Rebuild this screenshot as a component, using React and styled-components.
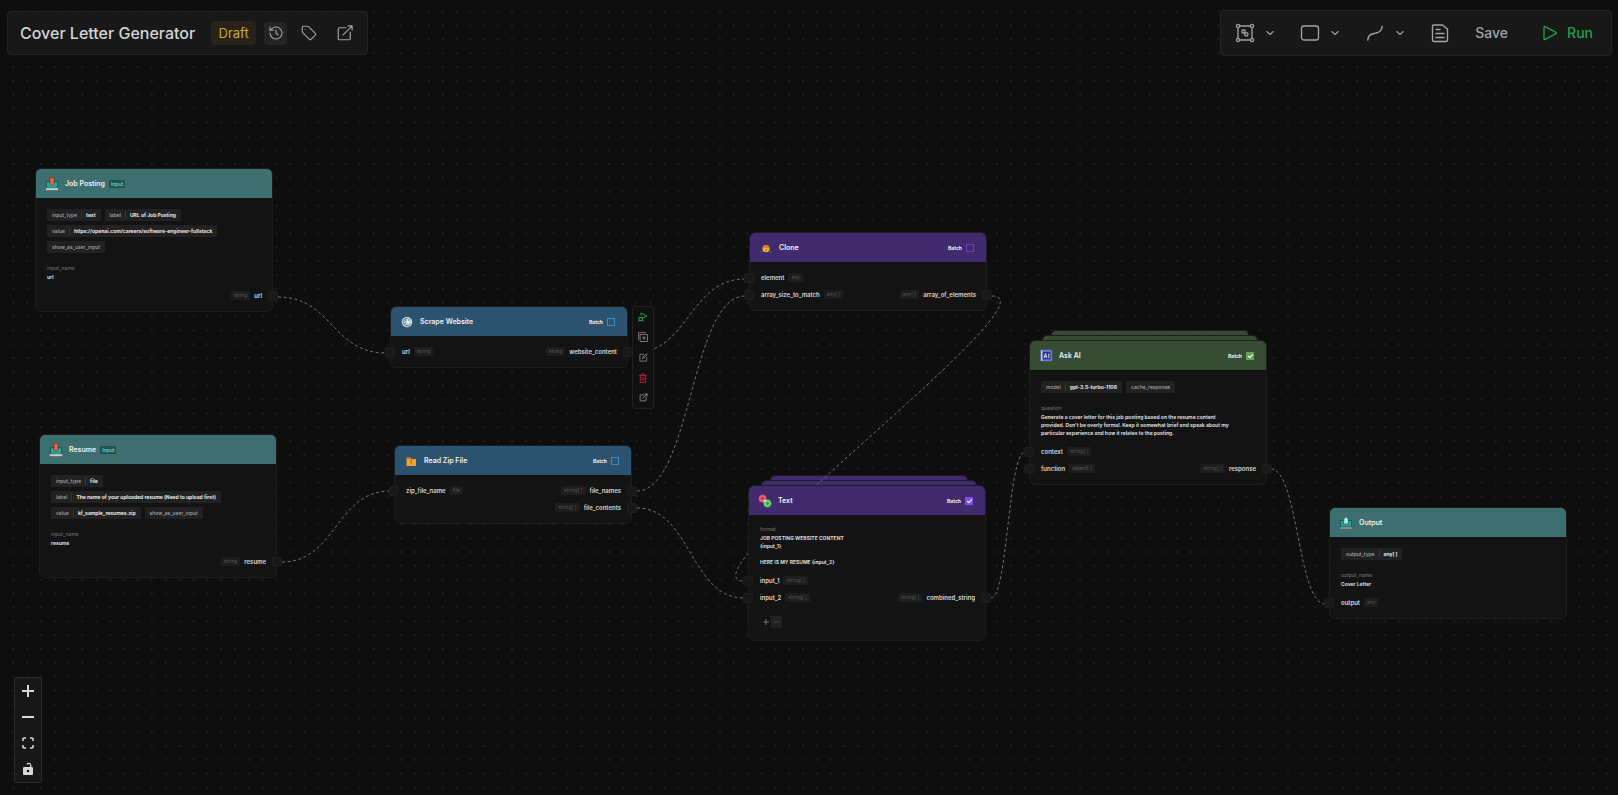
import React from "react";
import styled, { createGlobalStyle, css } from "styled-components";

const GlobalStyle = createGlobalStyle`
  *, *::before, *::after { box-sizing: border-box; }
  body {
    margin: 0;
    background: #0e0e0e;
    color: #e4e4e4;
    font-family: Inter, "Liberation Sans", sans-serif;
  }
  button { font-family: inherit; }
  svg { display: block; }
`;

const THEMES = {
  teal: { header: "#3d6e70", accent: "#2dd4bf" },
  blue: { header: "#2b5370", accent: "#3f8cc4" },
  purple: { header: "#412a6d", accent: "#6a3fc4", checked: "#7c4ff0" },
  green: { header: "#364d33", accent: "#5a9a56", checked: "#5fa35a" },
};

/* ---------- page shell ---------- */

const Canvas = styled.main`
  position: relative;
  display: flex;
  flex-direction: column;
  justify-content: space-between;
  height: 100vh;
  overflow: hidden;
  background: #0e0e0e;
`;

const GridLayer = styled.svg`
  position: absolute;
  inset: 0;
  width: 100%;
  height: 100%;
`;

const EdgeLayer = styled.svg`
  position: absolute;
  inset: 0;
  width: 100%;
  height: 100%;
  z-index: 2;
  pointer-events: none;
`;

const TopBar = styled.header`
  position: relative;
  z-index: 5;
  display: flex;
  justify-content: space-between;
  align-items: center;
  padding: 10px 6px 0 7px;
`;

const Panel = styled.div`
  display: flex;
  align-items: center;
  background: #181818;
  border: 1px solid #242424;
  border-radius: 4px;
`;

const TitlePanel = styled(Panel)`
  height: 44px;
  padding: 0 11px 0 12px;
`;

const ActionPanel = styled(Panel)`
  height: 46px;
  padding: 0 10px 0 12px;
`;

const FlowTitle = styled.h1`
  margin: 0 16px 0 0;
  font-size: 16px;
  line-height: 24px;
  font-weight: 500;
  color: #d4d4d4;
  white-space: nowrap;
`;

const DraftBadge = styled.span`
  width: 45px;
  margin-right: 8px;
  border-radius: 4px;
  background: #27231a;
  color: #c9ab27;
  font-size: 13px;
  line-height: 24px;
  font-weight: 400;
  text-align: center;
`;

const IconButton = styled.button`
  display: flex;
  align-items: center;
  justify-content: center;
  width: 23px;
  height: 23px;
  margin-right: ${(p) => p.$gap || 0}px;
  padding: 0;
  border: 0;
  border-radius: 4px;
  background: ${(p) => (p.$filled ? "#242424" : "transparent")};
  color: #a3a3a3;
`;

const ToolGroup = styled.div`
  display: flex;
  align-items: center;
  gap: 5px;
  margin-right: 20px;
`;

const ToolButton = styled(IconButton)`
  width: 24px;
  height: 24px;
`;

const ChevronButton = styled(IconButton)`
  width: 16px;
  height: 24px;
`;

const TextButton = styled.button`
  display: flex;
  align-items: center;
  gap: 9px;
  margin-left: ${(p) => p.$before}px;
  padding: 0 8px;
  border: 0;
  background: transparent;
  color: ${(p) => (p.$primary ? "#22a04a" : "#a3a3a3")};
  font-size: 14px;
  line-height: 24px;
  font-weight: 500;
`;

const ZoomPanel = styled.div`
  position: relative;
  z-index: 5;
  align-self: flex-start;
  display: flex;
  flex-direction: column;
  margin: 0 0 12px 14px;
  width: 28px;
  background: #171717;
  border: 1px solid #2a2a2a;
  border-radius: 2px;
`;

const ZoomButton = styled.button`
  display: flex;
  align-items: center;
  justify-content: center;
  height: 26px;
  padding: 0;
  border: 0;
  background: transparent;
  color: #d8d8d8;
`;

/* ---------- nodes ---------- */

const NodeAnchor = styled.article`
  position: absolute;
  left: ${(p) => p.$x}px;
  top: ${(p) => p.$y}px;
  width: 238px;
`;

const StackSheet = styled.div`
  position: absolute;
  z-index: 1;
  top: ${(p) => p.$depth * -5}px;
  left: ${(p) => p.$depth * 9 + 4}px;
  right: ${(p) => p.$depth * 9}px;
  height: 12px;
  border: 1px solid #1e1e1e;
  border-radius: 5px 5px 0 0;
  background: ${(p) => THEMES[p.$theme].header};
`;

const Card = styled.div`
  position: relative;
  z-index: 3;
  border: 1px solid #1d1d1d;
  border-radius: 6px;
  background: #131313;
`;

const CardHeader = styled.header`
  display: flex;
  align-items: center;
  height: 29px;
  padding: 0 12px 0 9px;
  border-radius: 5px 5px 0 0;
  background: ${(p) => THEMES[p.$theme].header};
`;

const IconSlot = styled.span`
  display: flex;
  align-items: center;
  justify-content: center;
  width: 14px;
  margin-right: 6px;
`;

const NodeTitle = styled.h2`
  margin: 0;
  font-size: 7px;
  line-height: 12px;
  font-weight: 600;
  color: #f2f2f2;
  white-space: nowrap;
`;

const InputBadge = styled.span`
  margin-left: 4px;
  padding: 0 2px;
  border-radius: 1px;
  background: #24504f;
  color: #6fe3d8;
  font-size: 5px;
  line-height: 8px;
  font-weight: 500;
`;

const BatchLabel = styled.label`
  display: flex;
  align-items: center;
  gap: 4px;
  margin-left: auto;
  font-size: 5px;
  line-height: 8px;
  font-weight: 700;
  color: #f2f2f2;
`;

const BatchBox = styled.input`
  appearance: none;
  display: grid;
  place-items: center;
  width: 8px;
  height: 8px;
  margin: 0;
  border: 1px solid ${(p) => THEMES[p.$theme].accent};
  ${(p) =>
    p.checked &&
    css`
      border-color: ${THEMES[p.$theme].checked};
      background: ${THEMES[p.$theme].checked};
    `}
  &:checked::before {
    content: "";
    width: 3px;
    height: 5px;
    border: solid #fff;
    border-width: 0 1px 1px 0;
    transform: rotate(45deg);
  }
`;

const CardBody = styled.div`
  padding: 7px 10px 7px 11px;
`;

const Chips = styled.div`
  display: flex;
  flex-wrap: wrap;
  gap: 4px;
  margin: 4px 0 11px;
`;

const Chip = styled.span`
  display: flex;
  align-items: center;
  height: 12px;
  padding: 0 5px;
  border-radius: 1px;
  background: #212121;
  color: #a8a8a8;
  font-size: 5px;
  line-height: 8px;
  font-weight: 500;
  white-space: nowrap;
`;

const ChipValue = styled.strong`
  margin-left: 4px;
  padding-left: 4px;
  border-left: 1px solid #343434;
  color: #e8e8e8;
  font-weight: 700;
`;

const Field = styled.div`
  margin: 3px 0 6px;
  font-size: 5px;
`;

const FieldName = styled.div`
  line-height: 9px;
  font-weight: 500;
  color: #6c6c6c;
`;

const FieldText = styled.p`
  max-width: 192px;
  margin: 0;
  line-height: 8px;
  font-weight: 700;
  color: #dcdcdc;
  white-space: pre-line;
`;

const PortRow = styled.div`
  display: flex;
  justify-content: space-between;
  align-items: center;
  height: 17px;
`;

const Port = styled.div`
  position: relative;
  display: flex;
  flex-direction: ${(p) => (p.$side === "out" ? "row-reverse" : "row")};
  align-items: center;
  gap: 4px;
  height: 17px;
  margin-left: ${(p) => (p.$side === "out" ? "auto" : "0")};
  font-size: 6px;
  line-height: 9px;
  font-weight: 600;
  color: #d8d8d8;
`;

const TypeTag = styled.span`
  padding: 0 3px;
  border-radius: 1px;
  background: #1d1d1d;
  color: #585858;
  font-size: 5px;
  line-height: 9px;
  font-weight: 400;
`;

const Handle = styled.i`
  position: absolute;
  top: 4px;
  ${(p) => (p.$side === "out" ? "right: -16px;" : "left: -17px;")}
  width: 10px;
  height: 10px;
  border: 1px solid #1e1e1e;
  border-radius: 2px;
  background: #191919;
`;

const Counter = styled.div`
  display: flex;
  margin: 10px 0 5px;
`;

const CounterButton = styled.button`
  display: flex;
  align-items: center;
  justify-content: center;
  width: 11px;
  height: 12px;
  padding: 0;
  border: 1px solid ${(p) => (p.$muted ? "#222" : "#181818")};
  background: ${(p) => (p.$muted ? "#222" : "#111")};
  color: ${(p) => (p.$muted ? "#4a4a4a" : "#8a8a8a")};
`;

const NodeTools = styled.div`
  position: absolute;
  z-index: 4;
  top: 0;
  left: 242px;
  display: flex;
  flex-direction: column;
  justify-content: space-around;
  align-items: center;
  width: 22px;
  height: 103px;
  border: 1px solid #202020;
  border-radius: 3px;
  background: #101010;
`;

const NodeToolButton = styled.button`
  display: flex;
  align-items: center;
  justify-content: center;
  width: 20px;
  height: 20px;
  padding: 0;
  border: 0;
  background: transparent;
  color: ${(p) => p.$tone || "#8c8c8c"};
`;

/* ---------- icons ---------- */

const Line = ({ size = 18, box = 24, width = 1.5, children }) => (
  <svg width={size} height={size} viewBox={`0 0 ${box} ${box}`} fill="none" stroke="currentColor" strokeWidth={width} strokeLinecap="round" strokeLinejoin="round" aria-hidden="true">
    {children}
  </svg>
);

const HistoryIcon = () => (
  <Line size={16} width={1.6}>
    <path d="M3 12a9 9 0 1 0 3-6.7L3 8" />
    <path d="M3 3v5h5M12 7v5l3 3" />
  </Line>
);
const TagIcon = () => (
  <Line size={18} width={1.5}>
    <path d="M3 4.500A1.500 1.500 0 0 1 4.500 3H10a2 2 0 0 1 1.400.6l9 9a1.500 1.500 0 0 1 0 2.100l-5.700 5.700a1.500 1.500 0 0 1-2.100 0l-9-9A2 2 0 0 1 3 10z" />
    <path d="M7 7h.01" />
  </Line>
);
const OpenIcon = ({ size = 18, width = 1.6 }) => (
  <Line size={size} width={width}>
    <path d="M13 5H4.500A1.500 1.500 0 0 0 3 6.500v13A1.500 1.500 0 0 0 4.500 21h13a1.500 1.500 0 0 0 1.500-1.500V11" />
    <path d="M9.500 14.500 21.500 2.500M16 2.500h5.500V8" />
  </Line>
);
const GroupIcon = () => (
  <Line size={20} box={20} width={1.3}>
    <path d="M5 3h10M5 17h10M3 5v10M17 5v10" />
    <circle cx="3" cy="3" r="1.600" /><circle cx="17" cy="3" r="1.600" />
    <circle cx="3" cy="17" r="1.600" /><circle cx="17" cy="17" r="1.600" />
    <rect x="7" y="7" width="3" height="3" rx=".8" />
    <rect x="9.800" y="9.800" width="3" height="3" rx=".8" />
  </Line>
);
const ChevronIcon = () => (
  <Line size={8} box={8} width={1.1}><path d="M.8 2.500 4 5.500 7.200 2.500" /></Line>
);
const RectIcon = () => (
  <Line size={20} box={20} width={1.3}><rect x="1.500" y="3" width="17" height="14" rx="2.500" /></Line>
);
const CurveIcon = () => (
  <Line size={18} box={18} width={1.5}><path d="M1.800 16c.3-4 2-5.600 5.300-6.300l3-.6c3.500-.8 5.500-2.500 6-6.600" /></Line>
);
const DocIcon = () => (
  <Line size={20} box={20} width={1.4}>
    <path d="M3.500 2h9L17.500 6v10.500a2 2 0 0 1-2 2h-11a2 2 0 0 1-2-2V3a1 1 0 0 1 1-1z" />
    <path d="M6 6.500h4M6 10.500h8M6 14.500h8" />
  </Line>
);
const PlayIcon = () => (
  <Line size={16} box={16} width={1.3}><path d="M2 2.300v11.400c0 .7.6 1 1.200.7L14 8.600c.6-.3.6-.9 0-1.200L3.200 1.600C2.600 1.300 2 1.600 2 2.300z" /></Line>
);
const PlusIcon = ({ size = 12, width = 2 }) => (
  <Line size={size} box={12} width={width}><path d="M6 0v12M0 6h12" strokeLinecap="butt" /></Line>
);
const MinusIcon = ({ size = 12, width = 2 }) => (
  <Line size={size} box={12} width={width}><path d="M0 6h12" strokeLinecap="butt" /></Line>
);
const FitIcon = () => (
  <Line size={12} box={12} width={1.6}><path d="M1 4V2a1 1 0 0 1 1-1h2M8 1h2a1 1 0 0 1 1 1v2M11 8v2a1 1 0 0 1-1 1H8M4 11H2a1 1 0 0 1-1-1V8" strokeLinecap="butt" /></Line>
);
const UnlockIcon = () => (
  <svg width="12" height="14" viewBox="0 0 12 14" aria-hidden="true">
    <path fill="currentColor" fillRule="evenodd" d="M2 5h8a1 1 0 0 1 1 1v6a1 1 0 0 1-1 1H2a1 1 0 0 1-1-1V6a1 1 0 0 1 1-1zm4 2.700a1.300 1.300 0 1 0 0 2.600 1.300 1.300 0 0 0 0-2.600z" />
    <path d="M5 2.500C5.300 1 8.500.6 8.700 3.200V5" fill="none" stroke="currentColor" strokeWidth="1.300" />
  </svg>
);
const RunNodeIcon = () => (
  <Line size={10} box={10} width={1}>
    <path d="M3 3V1l6 3-3 2M1.500 5.500h3v3h-3zM.5 5 1.500 6M5.500 5l-1 1M.5 9l1-.7M5.500 9l-1-.7" />
  </Line>
);
const CopyIcon = () => (
  <Line size={10} box={10} width={0.8}><path d="M2.500 2.500h7v7h-7zM.6 7.500V.6h7M6 4.500v3M4.500 6h3" /></Line>
);
const EditIcon = () => (
  <Line size={9} box={10} width={0.9}><path d="M5 1.500H1v7.500h7.500V5M4 6l.4-1.500L8.200.8l1 1L5.500 5.600 4 6" /></Line>
);
const TrashIcon = () => (
  <Line size={10} box={10} width={1}><path d="M1.500 2.500h7M3.500 2.300V1h3v1.300M2.300 2.500v7h5.400v-7M4.200 4.300v3.200M5.800 4.300v3.200" /></Line>
);

const TrayIcon = ({ up }) => (
  <svg width="14" height="14" viewBox="0 0 14 14" aria-hidden="true">
    <path d="M1.500 4.500h11V11h-11z" fill="#1fa79b" stroke="#123c40" strokeWidth=".6" />
    <path d="M.6 10.800h12.800v2.600H.6z" fill={up ? "#8b9496" : "#c8cfd0"} stroke="#3a4648" strokeWidth=".4" />
    {up ? (
      <path d="M7 .6 9.300 3V8H4.700V3z" fill="#a4f2e4" stroke="#16494b" strokeWidth=".7" />
    ) : (
      <path d="M5 .5h4v4.800h1L7 8.500 4 5.300h1z" fill="#f2603f" stroke="#6d2a25" strokeWidth=".6" />
    )}
  </svg>
);
const GlobeIcon = () => (
  <svg width="12" height="12" viewBox="0 0 12 12" aria-hidden="true">
    <circle cx="6" cy="6" r="5.300" fill="#c5d5df" />
    <path d="M6.500 2.200A3.800 3.800 0 1 0 9.500 8M4 3.500l2 2.500-2.500 2M6 6l3-3.500" fill="none" stroke="#4a7898" strokeWidth="1" />
    <circle cx="6.500" cy="5.700" r="1.300" fill="#fff" />
  </svg>
);
const ZipIcon = () => (
  <svg width="12" height="12" viewBox="0 0 12 12" aria-hidden="true">
    <path d="M1.500 2.500h4l1 1.500h4.500v7H1.500z" fill="#f0a22c" />
    <path d="M1.500 2.500h4l1 1.500H1.500z" fill="#c86f1c" />
    <path d="M6.300 4.500V9" stroke="#8c5a1b" strokeWidth="1.200" strokeDasharray="1 .6" />
  </svg>
);
const CloneIcon = () => (
  <svg width="12" height="12" viewBox="0 0 12 12" aria-hidden="true">
    <path d="M.8 10.500 2 8.800M11.200 10.500 10 8.800" stroke="#2c8f7a" strokeWidth=".9" />
    <circle cx="6" cy="6.700" r="3.600" fill="#f3b134" />
    <path d="M2.800 5.500a3.300 3.300 0 0 1 6.400 0L8 6.300 6 5.200 4 6.300z" fill="#e2702d" />
    <path d="M4.800 8.200h2.400" stroke="#9a5414" strokeWidth=".8" />
  </svg>
);
const TextIcon = () => (
  <svg width="14" height="14" viewBox="0 0 14 14" aria-hidden="true">
    <circle cx="4.600" cy="4.600" r="4.200" fill="#f0577d" stroke="#3a1c48" strokeWidth=".4" />
    <circle cx="9.400" cy="9.400" r="4.200" fill="#6fca7c" stroke="#1d3c2c" strokeWidth=".4" />
    <circle cx="4.500" cy="4.300" r="1.200" fill="#9e2f55" />
    <circle cx="9.600" cy="9.500" r="1.200" fill="#2f7c46" />
    <path d="m5.500 7.300 2.300-.9" stroke="#fff" strokeWidth="1.200" />
  </svg>
);
const AiIcon = () => (
  <svg width="13" height="13" viewBox="0 0 13 13" aria-hidden="true">
    <rect x=".8" y=".8" width="11.400" height="11.400" rx="1.500" fill="#6a78d8" />
    <path d="M1.500 1v11" stroke="#a9c8ff" strokeWidth="1.400" />
    <rect x="3" y="2.800" width="7.500" height="7.500" fill="#33307d" />
    <path d="m4 9 1.500-4.500L7 9M4.600 7.600h1.900M8.800 4.500V9" fill="none" stroke="#e8ecff" strokeWidth=".9" />
  </svg>
);

/* ---------- data ---------- */

const NODES = [
  {
    id: "job", title: "Job Posting", theme: "teal", x: 35, y: 168, icon: <TrayIcon />, badge: "Input",
    chips: [["input_type", "text"], ["label", "URL of Job Posting"], ["value", "https://openai.com/careers/software-engineer-fullstack"], ["show_as_user_input"]],
    field: ["input_name", "url"],
    ports: [{ out: ["url", "string"] }],
  },
  {
    id: "resume", title: "Resume", theme: "teal", x: 39, y: 434, icon: <TrayIcon />, badge: "Input",
    chips: [["input_type", "file"], ["label", "The name of your uploaded resume (Need to upload first)"], ["value", "kf_sample_resumes.zip"], ["show_as_user_input"]],
    field: ["input_name", "resume"],
    ports: [{ out: ["resume", "string"] }],
  },
  {
    id: "scrape", title: "Scrape Website", theme: "blue", x: 390, y: 306, icon: <GlobeIcon />, batch: false, tools: true,
    ports: [{ in: ["url", "string"], out: ["website_content", "string"] }],
  },
  {
    id: "zip", title: "Read Zip File", theme: "blue", x: 394, y: 445, icon: <ZipIcon />, batch: false,
    ports: [{ in: ["zip_file_name", "file"], out: ["file_names", "string[ ]"] }, { out: ["file_contents", "string[ ]"] }],
  },
  {
    id: "clone", title: "Clone", theme: "purple", x: 749, y: 232, icon: <CloneIcon />, batch: false,
    ports: [{ in: ["element", "any"] }, { in: ["array_size_to_match", "any[ ]"], out: ["array_of_elements", "any[ ]"] }],
  },
  {
    id: "text", title: "Text", theme: "purple", x: 748, y: 485, icon: <TextIcon />, batch: true, counter: true,
    field: ["format", "JOB POSTING WEBSITE CONTENT\n{input_1}\n\nHERE IS MY RESUME {input_2}"],
    ports: [{ in: ["input_1", "string[ ]"] }, { in: ["input_2", "string[ ]"], out: ["combined_string", "string[ ]"] }],
  },
  {
    id: "ai", title: "Ask AI", theme: "green", x: 1029, y: 340, icon: <AiIcon />, batch: true,
    chips: [["model", "gpt-3.5-turbo-1106"], ["cache_response"]],
    field: ["question", "Generate a cover letter for this job posting based on the resume content provided. Don't be overly formal. Keep it somewhat brief and speak about my particular experience and how it relates to the posting."],
    ports: [{ in: ["context", "string[ ]"] }, { in: ["function", "object[ ]"], out: ["response", "string[ ]"] }],
  },
  {
    id: "output", title: "Output", theme: "teal", x: 1329, y: 507, icon: <TrayIcon up />,
    chips: [["output_type", "any[ ]"]],
    field: ["output_name", "Cover Letter"],
    ports: [{ in: ["output", "any"] }],
  },
];

const EDGES = [
  [278, 297, 386, 353],
  [282, 562, 390, 491],
  [633, 353, 745, 279],
  [637, 491, 745, 296],
  [637, 508, 744, 598],
  [992, 296, 744, 581],
  [991, 598, 1025, 452],
  [1271, 469, 1325, 604],
];

const edgePath = ([x1, y1, x2, y2]) => {
  const reach = x2 >= x1 ? (x2 - x1) / 2 : 4.4 * Math.sqrt(x1 - x2);
  return `M${x1} ${y1}C${x1 + reach} ${y1} ${x2 - reach} ${y2} ${x2} ${y2}`;
};

/* ---------- components ---------- */

function PortItem({ side, port }) {
  return (
    <Port $side={side}>
      <span>{port[0]}</span>
      <TypeTag>{port[1]}</TypeTag>
      <Handle $side={side} />
    </Port>
  );
}

function FlowNode({ node }) {
  const hasBatch = node.batch !== undefined;
  return (
    <NodeAnchor $x={node.x} $y={node.y}>
      {node.batch && (
        <>
          <StackSheet $theme={node.theme} $depth={2} />
          <StackSheet $theme={node.theme} $depth={1} />
        </>
      )}
      <Card>
        <CardHeader $theme={node.theme}>
          <IconSlot>{node.icon}</IconSlot>
          <NodeTitle>{node.title}</NodeTitle>
          {node.badge && <InputBadge>{node.badge}</InputBadge>}
          {hasBatch && (
            <BatchLabel>
              Batch
              <BatchBox type="checkbox" checked={node.batch} readOnly $theme={node.theme} />
            </BatchLabel>
          )}
        </CardHeader>
        <CardBody>
          {node.chips && (
            <Chips>
              {node.chips.map(([name, value]) => (
                <Chip key={name}>
                  {name}
                  {value && <ChipValue>{value}</ChipValue>}
                </Chip>
              ))}
            </Chips>
          )}
          {node.field && (
            <Field>
              <FieldName>{node.field[0]}</FieldName>
              <FieldText>{node.field[1]}</FieldText>
            </Field>
          )}
          {node.ports.map((row, i) => (
            <PortRow key={i}>
              {row.in && <PortItem side="in" port={row.in} />}
              {row.out && <PortItem side="out" port={row.out} />}
            </PortRow>
          ))}
          {node.counter && (
            <Counter>
              <CounterButton type="button" aria-label="Add input"><PlusIcon size={6} width={1.6} /></CounterButton>
              <CounterButton type="button" aria-label="Remove input" $muted><MinusIcon size={6} width={1.6} /></CounterButton>
            </Counter>
          )}
        </CardBody>
      </Card>
      {node.tools && (
        <NodeTools>
          <NodeToolButton type="button" aria-label="Run node" $tone="#22a04a"><RunNodeIcon /></NodeToolButton>
          <NodeToolButton type="button" aria-label="Duplicate"><CopyIcon /></NodeToolButton>
          <NodeToolButton type="button" aria-label="Edit"><EditIcon /></NodeToolButton>
          <NodeToolButton type="button" aria-label="Delete" $tone="#a81f3a"><TrashIcon /></NodeToolButton>
          <NodeToolButton type="button" aria-label="Open"><OpenIcon size={9} width={2.4} /></NodeToolButton>
        </NodeTools>
      )}
    </NodeAnchor>
  );
}

export default function App() {
  return (
    <>
      <GlobalStyle />
      <Canvas>
        <GridLayer aria-hidden="true">
          <defs>
            <pattern id="dots" x="6.400" y="4.700" width="13.855" height="13.855" patternUnits="userSpaceOnUse">
              <circle cx="6.900" cy="6.900" r="0.700" fill="#363636" />
            </pattern>
          </defs>
          <rect width="100%" height="100%" fill="url(#dots)" />
        </GridLayer>
        <EdgeLayer aria-hidden="true">
          {EDGES.map((edge) => (
            <path key={edge.join()} d={edgePath(edge)} fill="none" stroke="#727272" strokeWidth="1" strokeDasharray="3 2.500" />
          ))}
        </EdgeLayer>
        {NODES.map((node) => <FlowNode key={node.id} node={node} />)}

        <TopBar>
          <TitlePanel>
            <FlowTitle>Cover Letter Generator</FlowTitle>
            <DraftBadge>Draft</DraftBadge>
            <IconButton type="button" aria-label="History" $filled $gap={10}><HistoryIcon /></IconButton>
            <IconButton type="button" aria-label="Tags" $gap={13}><TagIcon /></IconButton>
            <IconButton type="button" aria-label="Share"><OpenIcon /></IconButton>
          </TitlePanel>
          <ActionPanel>
            <ToolGroup>
              <ToolButton type="button" aria-label="Group"><GroupIcon /></ToolButton>
              <ChevronButton type="button" aria-label="Group options"><ChevronIcon /></ChevronButton>
            </ToolGroup>
            <ToolGroup>
              <ToolButton type="button" aria-label="Shape"><RectIcon /></ToolButton>
              <ChevronButton type="button" aria-label="Shape options"><ChevronIcon /></ChevronButton>
            </ToolGroup>
            <ToolGroup>
              <ToolButton type="button" aria-label="Edge style"><CurveIcon /></ToolButton>
              <ChevronButton type="button" aria-label="Edge options"><ChevronIcon /></ChevronButton>
            </ToolGroup>
            <ToolButton type="button" aria-label="Notes"><DocIcon /></ToolButton>
            <TextButton type="button" $before={15}>Save</TextButton>
            <TextButton type="button" $before={18} $primary><PlayIcon />Run</TextButton>
          </ActionPanel>
        </TopBar>

        <ZoomPanel>
          <ZoomButton type="button" aria-label="Zoom in"><PlusIcon /></ZoomButton>
          <ZoomButton type="button" aria-label="Zoom out"><MinusIcon /></ZoomButton>
          <ZoomButton type="button" aria-label="Fit view"><FitIcon /></ZoomButton>
          <ZoomButton type="button" aria-label="Unlock"><UnlockIcon /></ZoomButton>
        </ZoomPanel>
      </Canvas>
    </>
  );
}
